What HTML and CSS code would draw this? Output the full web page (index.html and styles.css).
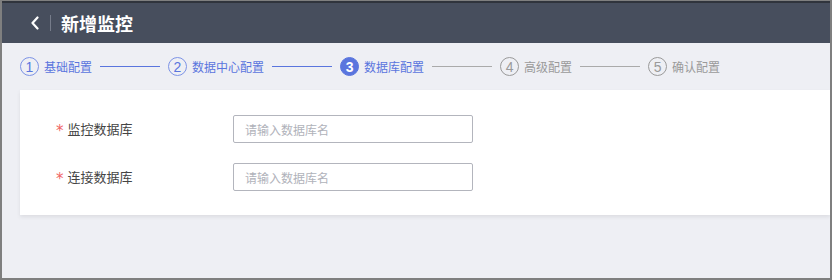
FILE: index.html
```html
<!DOCTYPE html>
<html lang="zh-CN">
<head>
    <meta charset="UTF-8">
    <title>新增监控</title>
    <link rel="stylesheet" href="styles.css">
</head>
<body>
    <div class="frame">
        <div class="header">
            <span class="back">
                <svg width="10" height="14" viewBox="0 0 10 14"><path d="M7.5 1.5 L2.5 7 L7.5 12.5" fill="none" stroke="#ffffff" stroke-width="2.2" stroke-linecap="round" stroke-linejoin="round"/></svg>
            </span>
            <span class="divider"></span>
            <h1>新增监控</h1>
        </div>

        <div class="steps">
            <div class="step done"><span class="num">1</span><span class="name">基础配置</span></div>
            <span class="line done"></span>
            <div class="step done"><span class="num">2</span><span class="name">数据中心配置</span></div>
            <span class="line done"></span>
            <div class="step active"><span class="num">3</span><span class="name">数据库配置</span></div>
            <span class="line"></span>
            <div class="step"><span class="num">4</span><span class="name">高级配置</span></div>
            <span class="line"></span>
            <div class="step"><span class="num">5</span><span class="name">确认配置</span></div>
        </div>

        <div class="card">
            <div class="row">
                <label for="monitor-db"><span class="star">*</span>监控数据库</label>
                <input type="text" id="monitor-db" placeholder="请输入数据库名">
            </div>
            <div class="row">
                <label for="connect-db"><span class="star">*</span>连接数据库</label>
                <input type="text" id="connect-db" placeholder="请输入数据库名">
            </div>
        </div>
    </div>
</body>
</html>
```

FILE: styles.css
```css
* {
    box-sizing: border-box;
}

body {
    margin: 0;
    font-family: "Noto Sans CJK SC", "Liberation Sans", sans-serif;
    background: #7f7f7f;
}

.frame {
    width: 832px;
    height: 280px;
    border: 2px solid #7f7f7f;
    border-top-width: 1px;
    background: #eeeff4;
    overflow: hidden;
}

.header {
    height: 42px;
    background: #474e5d;
    border-top: 2px solid #30343c;
    display: flex;
    align-items: center;
    padding-left: 28px;
}

.back {
    display: flex;
    align-items: center;
}

.divider {
    width: 1px;
    height: 16px;
    background: #767c8a;
    margin: 0 10px 0 10px;
}

.header h1 {
    margin: 0;
    color: #ffffff;
    font-size: 18px;
    font-weight: bold;
    line-height: 1;
}

.steps {
    height: 47px;
    display: flex;
    align-items: center;
    padding-left: 18px;
}

.step {
    display: flex;
    align-items: center;
    color: #9a9a9a;
    font-size: 12px;
}

.step .num {
    width: 19px;
    height: 19px;
    border: 1px solid #9a9a9a;
    border-radius: 50%;
    display: flex;
    align-items: center;
    justify-content: center;
    font-family: "Liberation Sans", sans-serif;
    font-size: 14px;
    margin-right: 5px;
}

.step.done {
    color: #5a75de;
}

.step.done .num {
    border-color: #7d93e6;
}

.step.active {
    color: #5a75de;
}

.step.active .num {
    background: #5a75de;
    border-color: #5a75de;
    color: #ffffff;
    font-weight: bold;
}

.line {
    width: 60px;
    height: 1px;
    background: #aaaaaa;
    margin: 0 8px;
}

.line.done {
    background: #5a75de;
}

.card {
    margin-left: 18px;
    background: #ffffff;
    padding: 25px 0 24px 36px;
    box-shadow: 0 2px 4px rgba(0, 0, 0, 0.08);
    display: flex;
    flex-direction: column;
    gap: 20px;
}

.row {
    display: flex;
    align-items: center;
}

.row label {
    width: 177px;
    font-size: 13px;
    color: #444444;
    display: flex;
    align-items: center;
    margin-top: -2px;
}

.star {
    color: #f06464;
    font-family: "DejaVu Sans", sans-serif;
    font-size: 15px;
    margin-right: 4px;
    position: relative;
    top: 3px;
}

.row input {
    width: 240px;
    height: 28px;
    border: 1px solid #b3b5bd;
    border-radius: 2px;
    padding: 0 11px;
    font-size: 12px;
    font-family: "Noto Sans CJK SC", sans-serif;
    color: #333333;
}

.row input::placeholder {
    color: #b0b2ba;
}
```
